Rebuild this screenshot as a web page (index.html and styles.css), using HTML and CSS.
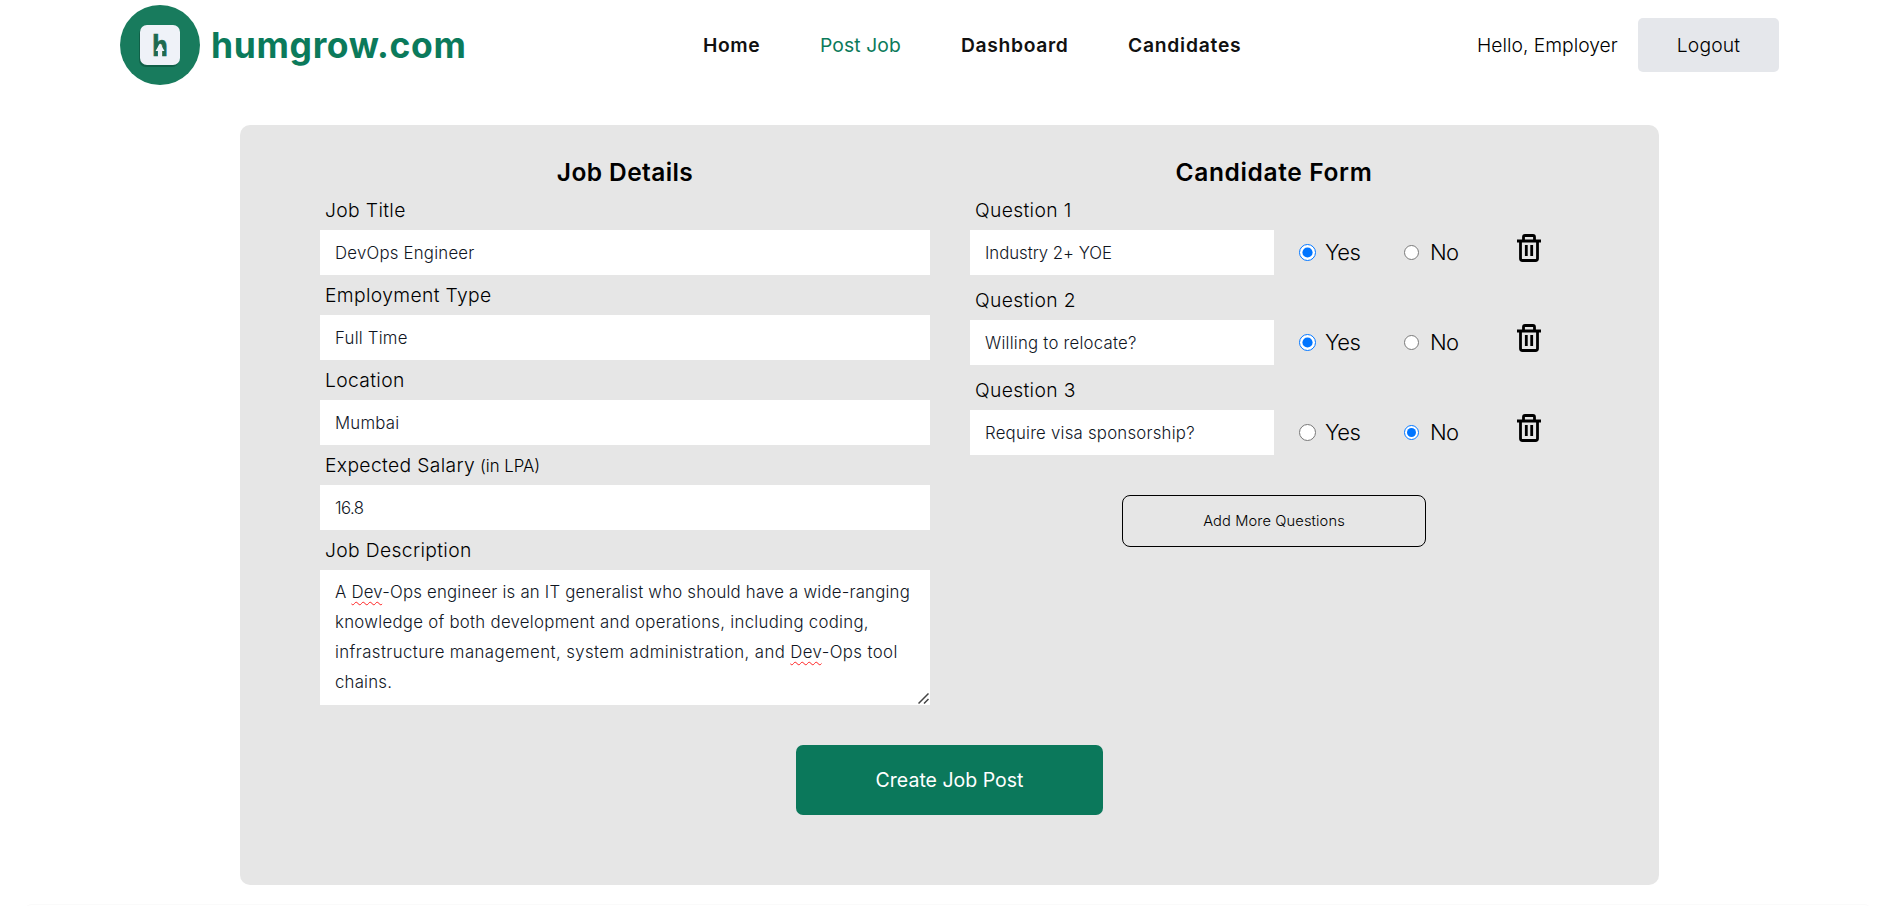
FILE: index.html
```html
<!DOCTYPE html>
<html lang="en">
<head>
<meta charset="utf-8">
<title>humgrow.com - Post Job</title>
<link rel="stylesheet" href="styles.css">
</head>
<body>
<svg width="0" height="0" class="defs">
  <symbol id="trash" viewBox="0 0 24 28">
    <path d="M0 7h24M6.500 7V3q0-1.500 1.500-1.500h8q1.500 0 1.500 1.500v4M3.500 7v17.500q0 2 2 2h13q2 0 2-2V7M9.300 11v11M14.700 11v11" fill="none" stroke="#000" stroke-width="2.800"/>
  </symbol>
</svg>
<header class="header">
  <a class="brand">
    <svg class="logo" width="80" height="80" viewBox="0 0 80 80">
      <circle cx="40" cy="40" r="40" fill="#187b5d"/>
      <rect x="19" y="22" width="40" height="40" rx="7" fill="#0b4e3a" opacity=".6"/>
      <rect x="20" y="20" width="40" height="40" rx="7" fill="#eff2f8"/>
      <text transform="translate(40 51) scale(.8 1)" text-anchor="middle" class="mark">h</text>
      <path d="M40 38.500l4.500 7.500h-2.500v5.500h-4v-5.500h-2.500z" fill="#eff2f8"/>
    </svg>
    <span class="brand-name">humgrow.com</span>
  </a>
  <nav class="nav">
    <a class="n-home">Home</a><a class="n-post">Post Job</a><a class="n-dash">Dashboard</a><a class="n-cand">Candidates</a>
  </nav>
  <div class="account">
    <span class="hello">Hello, Employer</span>
    <button class="logout">Logout</button>
  </div>
</header>
<main class="card">
  <div class="columns">
    <section class="details">
      <h2 class="h-details">Job Details</h2>
      <label>Job Title</label>
      <input class="field" value="DevOps Engineer">
      <label>Employment Type</label>
      <input class="field" value="Full Time">
      <label>Location</label>
      <input class="field" value="Mumbai">
      <label>Expected Salary <span class="unit">(in LPA)</span></label>
      <input class="field salary" value="16.8">
      <label>Job Description</label>
      <div class="area">A <span class="miss">Dev</span>-Ops engineer is an IT generalist who should have a wide-ranging<br><span class="line2">knowledge of both development and operations, including coding,</span><br><span class="line3">infrastructure management, system administration, and <span class="miss">Dev</span>-Ops tool</span><br>chains.
        <svg class="grip" width="11" height="11" viewBox="0 0 11 11"><path d="M.5 10.500l10-10M6 10.500L10.500 6" stroke="#444" stroke-width="1.500" fill="none"/></svg>
      </div>
    </section>
    <section class="form">
      <h2 class="h-form">Candidate Form</h2>
      <div class="question">
        <label>Question 1</label>
        <div class="row"><input class="field q-one" value="Industry 2+ YOE">
          <span class="opt yes"><input type="radio" name="q1" checked>Yes</span><span class="opt no"><input type="radio" name="q1">No</span>
          <svg class="trash" width="24" height="28"><use href="#trash"/></svg></div>
      </div>
      <div class="question">
        <label>Question 2</label>
        <div class="row"><input class="field" value="Willing to relocate?">
          <span class="opt yes"><input type="radio" name="q2" checked>Yes</span><span class="opt no"><input type="radio" name="q2">No</span>
          <svg class="trash" width="24" height="28"><use href="#trash"/></svg></div>
      </div>
      <div class="question">
        <label>Question 3</label>
        <div class="row"><input class="field" value="Require visa sponsorship?">
          <span class="opt yes"><input type="radio" name="q3">Yes</span><span class="opt no"><input type="radio" name="q3" checked>No</span>
          <svg class="trash" width="24" height="28"><use href="#trash"/></svg></div>
      </div>
      <button class="add">Add More Questions</button>
    </section>
  </div>
  <button class="create">Create Job Post</button>
</main>
<footer class="footer"></footer>
</body>
</html>
```
FILE: styles.css
```css
* { box-sizing: border-box; }
body { margin: 0; height: 906px; overflow: hidden; background: #fff; color: #000; font: 400 19.3px Inter, "Liberation Sans", sans-serif; }
.defs { position: absolute; }
button, input { font-family: inherit; color: inherit; }
.header { display: grid; grid-template-columns: 583px 1fr auto; align-items: center; height: 90px; padding: 0 117px 0 120px; }
.brand { display: flex; align-items: center; gap: 11px; }
.mark { font: 700 28px "DejaVu Sans", sans-serif; fill: #1e6a4f; stroke: #1e6a4f; stroke-width: .6px; }
.brand-name { padding-top: 2px; font-size: 35.5px; font-weight: 700; letter-spacing: .65px; color: #0b7a5b; line-height: 44px; }
.nav { display: flex; gap: 60px; font-weight: 600; color: #111; }
.nav a { white-space: nowrap; }
.n-home { width: 57px; letter-spacing: .6px; }
.nav .n-post { width: 81px; font-weight: 400; color: #0b7a5b; letter-spacing: .1px; }
.n-dash { width: 107px; letter-spacing: .65px; }
.n-cand { width: 113px; letter-spacing: .75px; }
.account { display: flex; align-items: center; gap: 20px; }
.hello { width: 141px; white-space: nowrap; letter-spacing: 0; font-weight: 300; }
.logout { width: 141px; height: 54px; padding: 0; border: 0; border-radius: 5px; background: #e5e7eb; font-size: 19.3px; font-weight: 300; letter-spacing: .15px; }
.card { width: 1419px; height: 760px; margin: 35px 0 0 240px; padding: 30px 80px 0; border-radius: 10px; background: #e6e6e6; }
.columns { display: grid; grid-template-columns: 610px 608px; column-gap: 40px; height: 590px; }
h2 { margin: 0; height: 35px; line-height: 35px; font-size: 24.5px; font-weight: 600; text-align: center; }
.h-details { letter-spacing: .4px; }
.h-form { letter-spacing: .65px; }
label { display: block; height: 40px; padding-left: 5px; line-height: 40px; font-weight: 300; letter-spacing: .35px; }
.unit { font-size: 16.8px; letter-spacing: 0; margin-left: -1px; }
.field { display: block; width: 100%; height: 45px; padding: 0 15px; border: 0; background: #fff; font-size: 16.8px; font-weight: 300; color: #10161f; letter-spacing: .22px; outline: 0; }
.q-one { letter-spacing: -.05px; }
.salary { letter-spacing: -.6px; }
.area { position: relative; height: 135px; padding: 7px 15px 8px; background: #fff; font-size: 16.8px; font-weight: 300; line-height: 30px; color: #10161f; letter-spacing: .2px; white-space: nowrap; }
.line2 { letter-spacing: .28px; }
.line3 { letter-spacing: .4px; }
.miss { text-decoration: underline wavy #f22 1px; text-underline-offset: 3px; text-decoration-skip-ink: none; }
.grip { position: absolute; right: 1px; bottom: 1px; }
.question { height: 90px; }
.row { display: grid; grid-template-columns: 304px 25px 104px 114px 24px; height: 45px; align-items: center; }
.opt { display: flex; align-items: center; height: 44px; align-self: start; font-size: 22px; letter-spacing: -.6px; font-weight: 300; }
.opt input { width: 17px; height: 17px; margin: 0 9px 0 0; }
.yes { grid-column: 3; }
.no input { width: 15px; height: 15px; margin: 0 11px 0 1px; }
.trash { align-self: start; margin-top: 4px; }
.add { display: block; width: 304px; height: 52px; margin: 35px auto 0; border: 1px solid #000; border-radius: 8px; background: transparent; font-size: 14.7px; font-weight: 300; letter-spacing: .1px; }
.create { display: block; width: 307px; height: 70px; margin: 0 auto; border: 0; border-radius: 7px; background: #0b785b; color: #fff; font-size: 19.5px; letter-spacing: 0; }
.footer { height: 40px; margin: 19px 24px 0; border-top: 1px solid #fafafa; border-radius: 8px; }
```
